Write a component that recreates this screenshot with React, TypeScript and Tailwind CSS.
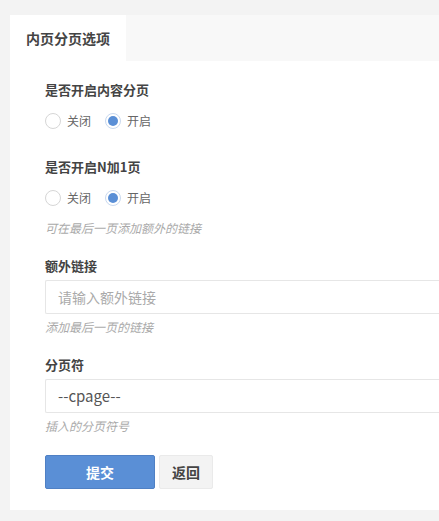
import React from "react";

const font = { fontFamily: '"Noto Sans CJK SC", "Noto Sans", sans-serif' };

function Radio({ checked, label }: { checked?: boolean; label: string }) {
  return (
    <div className="flex items-center mr-[14px]">
      <span
        className={
          "w-[16px] h-[16px] rounded-full border flex items-center justify-center bg-white " +
          (checked ? "border-[#c9d9ef]" : "border-[#d6d6d6]")
        }
      >
        {checked && <span className="w-[10px] h-[10px] rounded-full bg-[#5a8fd6]" />}
      </span>
      <span className="ml-[6px] text-[12px] leading-[20px] text-[#666]">{label}</span>
    </div>
  );
}

function Label({ children, mt }: { children: React.ReactNode; mt: string }) {
  return (
    <div className={"text-[13px] leading-[20px] font-bold text-[#444] " + mt}>{children}</div>
  );
}

function Hint({ children, mt }: { children: React.ReactNode; mt: string }) {
  return <div className={"text-[12px] leading-[20px] italic text-[#aaa] " + mt}>{children}</div>;
}

export default function App() {
  return (
    <div className="min-h-[521px] bg-[#f3f3f3] pt-[15px] pl-[10px] pb-[11px]" style={font}>
      <div className="bg-white">
        <div className="flex h-[46px] bg-[#f8f8f8]">
          <div className="bg-white px-[16px] whitespace-nowrap text-[14px] leading-[46px] font-bold text-[#444]">
            内页分页选项
          </div>
        </div>
        <div className="pl-[35px] pt-[19px] pb-[21px]">
          <Label mt="">是否开启内容分页</Label>
          <div className="flex mt-[11px] h-[20px]">
            <Radio label="关闭" />
            <Radio checked label="开启" />
          </div>
          <Label mt="mt-[26px]">是否开启N加1页</Label>
          <div className="flex mt-[11px] h-[20px]">
            <Radio label="关闭" />
            <Radio checked label="开启" />
          </div>
          <Hint mt="mt-[10px]">可在最后一页添加额外的链接</Hint>
          <Label mt="mt-[18px]">额外链接</Label>
          <div className="mt-[4px] h-[34px] border border-[#e6e6e6] border-r-0 rounded-l-[2px] pl-[12px] flex items-center text-[14px] text-[#aaa]">
            请输入额外链接
          </div>
          <Hint mt="mt-[3px]">添加最后一页的链接</Hint>
          <Label mt="mt-[18px]">分页符</Label>
          <div className="mt-[4px] h-[34px] border border-[#e6e6e6] border-r-0 rounded-l-[2px] pl-[12px] flex items-center text-[15px] text-[#555]">
            --cpage--
          </div>
          <Hint mt="mt-[3px]">插入的分页符号</Hint>
          <div className="flex mt-[19px] gap-[4px]">
            <button className="w-[110px] h-[34px] rounded-[2px] bg-[#5a8fd6] border border-[#4f80c4] text-white text-[14px] font-bold">
              提交
            </button>
            <button className="w-[54px] h-[34px] rounded-[2px] bg-[#f3f3f3] border border-[#eaeaea] text-[#444] text-[14px] font-bold">
              返回
            </button>
          </div>
        </div>
      </div>
    </div>
  );
}
